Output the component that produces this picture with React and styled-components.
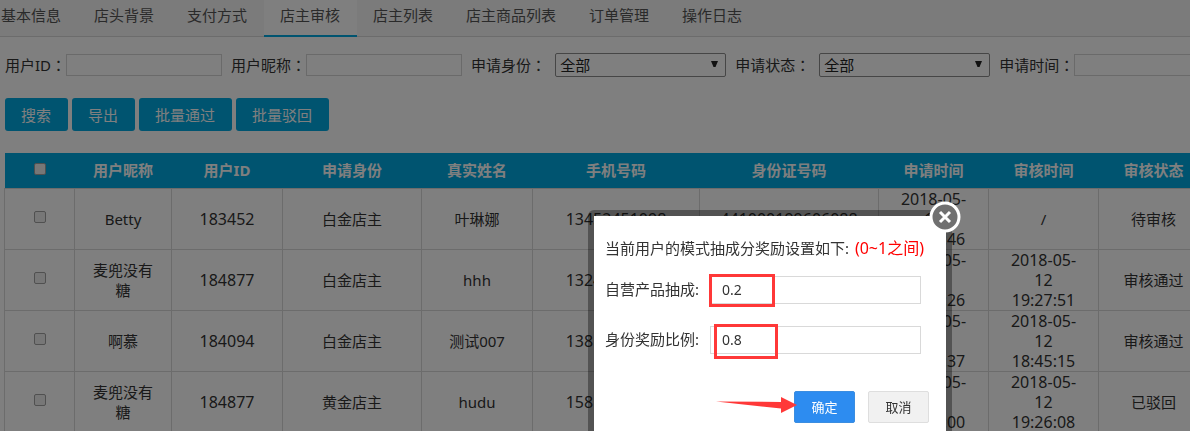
import React, { useState } from 'react';
import styled, { createGlobalStyle } from 'styled-components';

const GlobalStyle = createGlobalStyle`
    * {
        box-sizing: border-box;
    }
    body {
        margin: 0;
        overflow: hidden;
        background: #ffffff;
        color: #333333;
        font-family: "Noto Sans", "Noto Sans CJK SC", sans-serif;
        font-size: 15px;
        line-height: 20px;
    }
    button, input, select {
        font-family: inherit;
    }
`

const Tabs = styled.nav`
    display: flex;
    height: 37px;
    margin-left: -15px;
    background: #f6f6f6;
    border-bottom: 1px solid #d8d8d8;
`

const Tab = styled.a`
    height: 37px;
    padding: 5px 17px 0 16px;
    color: #555555;
    text-decoration: none;
    white-space: nowrap;
    background: ${props => props.$active ? '#ffffff' : 'transparent'};
    border-bottom: ${props => props.$active ? '2px solid #00a8e0' : '0'};
`

const Content = styled.main`
    padding: 16px 0 0 5px;
`

const Filters = styled.form`
    display: flex;
    align-items: center;
    gap: 9px;
    height: 24px;
`

const Field = styled.div`
    display: flex;
    flex: none;
    align-items: center;
    gap: ${props => props.$gap || 0}px;
`

const FieldLabel = styled.label`
    white-space: nowrap;
`

const Colon = styled.span`
    font-family: "Noto Sans CJK TC", sans-serif;
`

const TextInput = styled.input`
    width: 156px;
    height: 22px;
    padding: 0 4px;
    border: 1px solid #d5d5d5;
    background: transparent;
    font-size: 15px;
`

const SelectBox = styled.div`
    position: relative;
    svg {
        position: absolute;
        top: 8px;
        right: 8px;
        pointer-events: none;
    }
`

const Select = styled.select`
    display: block;
    width: 171px;
    height: 24px;
    padding: 0 4px;
    appearance: none;
    border: 1px solid #8c8c8c;
    border-radius: 2px;
    background: transparent;
    color: #222222;
    font-size: 15px;
`

const Actions = styled.div`
    display: flex;
    gap: 4px;
    margin: 21px 0 22px;
`

const ActionBt = styled.button`
    height: 33px;
    padding: 0 17px 0 16px;
    border: 0;
    border-radius: 3px;
    background: #00a8e0;
    color: #ffffff;
    font-size: 15px;
`

const TableBox = styled.div`
    margin-left: -1px;
    overflow: hidden;
`

const Table = styled.table`
    width: 100%;
    min-width: 1205px;
    table-layout: fixed;
    border-collapse: collapse;
    text-align: center;
`

const Th = styled.th`
    height: 35px;
    padding: 0;
    background: #00a8e0;
    color: #ffffff;
    font-weight: bold;
`

const Td = styled.td`
    height: 61px;
    padding: 0 ${props => props.$pad || 0}px;
    border: 1px solid #d8d8d8;
    font-size: ${props => props.$num ? 16 : 15}px;
    line-height: 20px;
`

const Check = styled.input`
    display: block;
    width: 12px;
    height: 12px;
    margin: 0 auto 3px;
    appearance: none;
    border: 1px solid #a0a0a0;
    border-radius: 2px;
    background: #eeeeee;
`

const Overlay = styled.div`
    position: fixed;
    inset: 0;
    display: flex;
    justify-content: flex-end;
    align-items: flex-start;
    padding: 210px 238px 0 0;
    background: rgba(0, 0, 0, 0.5);
`

const Dialog = styled.section`
    position: relative;
    width: 364px;
    border: 6px solid rgba(0, 0, 0, 0.35);
    border-radius: 6px;
    background: #ffffff;
    background-clip: padding-box;
`

const DialogBody = styled.div`
    padding: 22px 11px 30px;
`

const DialogTitle = styled.p`
    margin: 0 0 18px;
    white-space: nowrap;
`

const Range = styled.span`
    margin-left: 2px;
    color: #ff0000;
    font-size: 16px;
    line-height: 20px;
`

const DialogRow = styled.div`
    display: flex;
    align-items: center;
    margin-bottom: 22px;
`

const DialogLabel = styled.label`
    width: 105px;
    padding-bottom: 2px;
    white-space: nowrap;
`

const DialogField = styled.div`
    position: relative;
`

const DialogInput = styled.input`
    display: block;
    width: 211px;
    height: 28px;
    padding: 0 11px 2px;
    border: 1px solid #d9d9d9;
    color: #333333;
    font-size: 14px;
`

const Mark = styled.span`
    position: absolute;
    top: -2px;
    left: ${props => props.$left}px;
    width: ${props => props.$width}px;
    height: ${props => props.$height}px;
    border: 3px solid #ff3838;
    pointer-events: none;
`

const DialogFooter = styled.div`
    position: relative;
    display: flex;
    justify-content: flex-end;
    gap: 13px;
    padding: 15px 6px 0 0;
`

const DialogBt = styled.button`
    width: 61px;
    height: 32px;
    padding: 0 0 2px;
    border: 1px solid ${props => props.$primary ? '#3b8de0' : '#dedede'};
    border-radius: 2px;
    background: ${props => props.$primary ? '#2d8cf0' : '#f1f1f1'};
    color: ${props => props.$primary ? '#ffffff' : '#333333'};
    font-size: 13px;
`

const Arrow = styled.svg`
    position: absolute;
    top: 20px;
    left: 110px;
`

const CloseBt = styled.button`
    position: absolute;
    top: -15px;
    right: -15px;
    width: 32px;
    height: 32px;
    padding: 0;
    border: 0;
    background: transparent;
    svg {
        display: block;
    }
`

const tabs = ['基本信息', '店头背景', '支付方式', '店主审核', '店主列表', '店主商品列表', '订单管理', '操作日志']

const columns = [
    { name: '用户昵称', width: 97 },
    { name: '用户ID', width: 111 },
    { name: '申请身份', width: 139 },
    { name: '真实姓名', width: 111 },
    { name: '手机号码', width: 167 },
    { name: '身份证号码', width: 179 },
    { name: '申请时间', width: 110 },
    { name: '审核时间', width: 110 },
    { name: '审核状态', width: 110 },
]

const rows = [
    ['Betty', '183452', '白金店主', '叶琳娜', '13452451098', '441000199606088', '2018-05-14 10:21:46', '/', '待审核'],
    ['麦兜没有糖', '184877', '白金店主', 'hhh', '13245678901', '441000199606088', '2018-05-12 19:27:26', '2018-05-12 19:27:51', '审核通过'],
    ['啊慕', '184094', '白金店主', '测试007', '13812345678', '441000199606088', '2018-05-12 18:44:37', '2018-05-12 18:45:15', '审核通过'],
    ['麦兜没有糖', '184877', '黄金店主', 'hudu', '15812345678', '441000199606088', '2018-05-12 19:26:00', '2018-05-12 19:26:08', '已驳回'],
]

const FilterSelect = ({ id, label }) => (
    <Field $gap={9}>
        <FieldLabel htmlFor={id}>{label}<Colon>：</Colon></FieldLabel>
        <SelectBox>
            <Select id={id}>
                <option>全部</option>
            </Select>
            <svg width="7" height="6" viewBox="0 0 7 6"><path d="M0 0h7L4.5 6h-2z" fill="#222222" /></svg>
        </SelectBox>
    </Field>
)

const FilterInput = ({ id, label }) => (
    <Field>
        <FieldLabel htmlFor={id}>{label}<Colon>：</Colon></FieldLabel>
        <TextInput id={id} type="text" />
    </Field>
)

const RewardDialog = () => {
    const [commission, setCommission] = useState('0.2')
    const [reward, setReward] = useState('0.8')

    return (
        <Overlay>
            <Dialog role="dialog" aria-label="奖励设置">
                <DialogBody>
                    <DialogTitle>当前用户的模式抽成分奖励设置如下: <Range>(0~1之间)</Range></DialogTitle>
                    <DialogRow>
                        <DialogLabel htmlFor="commission">自营产品抽成:</DialogLabel>
                        <DialogField>
                            <DialogInput id="commission" value={commission} onChange={e => setCommission(e.target.value)} />
                            <Mark $left={-1} $width={66} $height={33} />
                        </DialogField>
                    </DialogRow>
                    <DialogRow>
                        <DialogLabel htmlFor="reward">身份奖励比例:</DialogLabel>
                        <DialogField>
                            <DialogInput id="reward" value={reward} onChange={e => setReward(e.target.value)} />
                            <Mark $left={4} $width={64} $height={35} />
                        </DialogField>
                    </DialogRow>
                    <DialogFooter>
                        <Arrow width="83" height="18" viewBox="0 0 83 18">
                            <path d="M1 5.5L66 6V1L82 9L66 17V12.5Z" fill="#ff3838" />
                        </Arrow>
                        <DialogBt $primary type="button">确定</DialogBt>
                        <DialogBt type="button">取消</DialogBt>
                    </DialogFooter>
                </DialogBody>
                <CloseBt type="button" aria-label="关闭">
                    <svg width="32" height="32" viewBox="0 0 32 32">
                        <circle cx="16" cy="16" r="14" fill="#707070" stroke="#ffffff" strokeWidth="3" />
                        <path d="M11 11L21 21M21 11L11 21" stroke="#ffffff" strokeWidth="3" />
                    </svg>
                </CloseBt>
            </Dialog>
        </Overlay>
    )
}

const App = () => {
    return (
        <>
            <GlobalStyle />
            <Tabs>
                {tabs.map(tab => <Tab key={tab} href="#" $active={tab === '店主审核'}>{tab}</Tab>)}
            </Tabs>
            <Content>
                <Filters>
                    <FilterInput id="userId" label="用户ID" />
                    <FilterInput id="nickname" label="用户昵称" />
                    <FilterSelect id="identity" label="申请身份" />
                    <FilterSelect id="status" label="申请状态" />
                    <FilterInput id="applyTime" label="申请时间" />
                </Filters>
                <Actions>
                    <ActionBt type="button">搜索</ActionBt>
                    <ActionBt type="button">导出</ActionBt>
                    <ActionBt type="button">批量通过</ActionBt>
                    <ActionBt type="button">批量驳回</ActionBt>
                </Actions>
                <TableBox>
                    <Table>
                        <colgroup>
                            <col width="70" />
                            {columns.map(col => <col key={col.name} width={col.width} />)}
                        </colgroup>
                        <thead>
                            <tr>
                                <Th><Check type="checkbox" aria-label="全选" /></Th>
                                {columns.map(col => <Th key={col.name}>{col.name}</Th>)}
                            </tr>
                        </thead>
                        <tbody>
                            {rows.map((row, i) => (
                                <tr key={i}>
                                    <Td><Check type="checkbox" aria-label={row[0]} /></Td>
                                    {row.map((cell, j) => (
                                        <Td key={j} $num={/^\d/.test(cell)} $pad={j === 4 || j === 5 ? 0 : 16}>{cell}</Td>
                                    ))}
                                </tr>
                            ))}
                        </tbody>
                    </Table>
                </TableBox>
            </Content>
            <RewardDialog />
        </>
    )
}

export default App;
